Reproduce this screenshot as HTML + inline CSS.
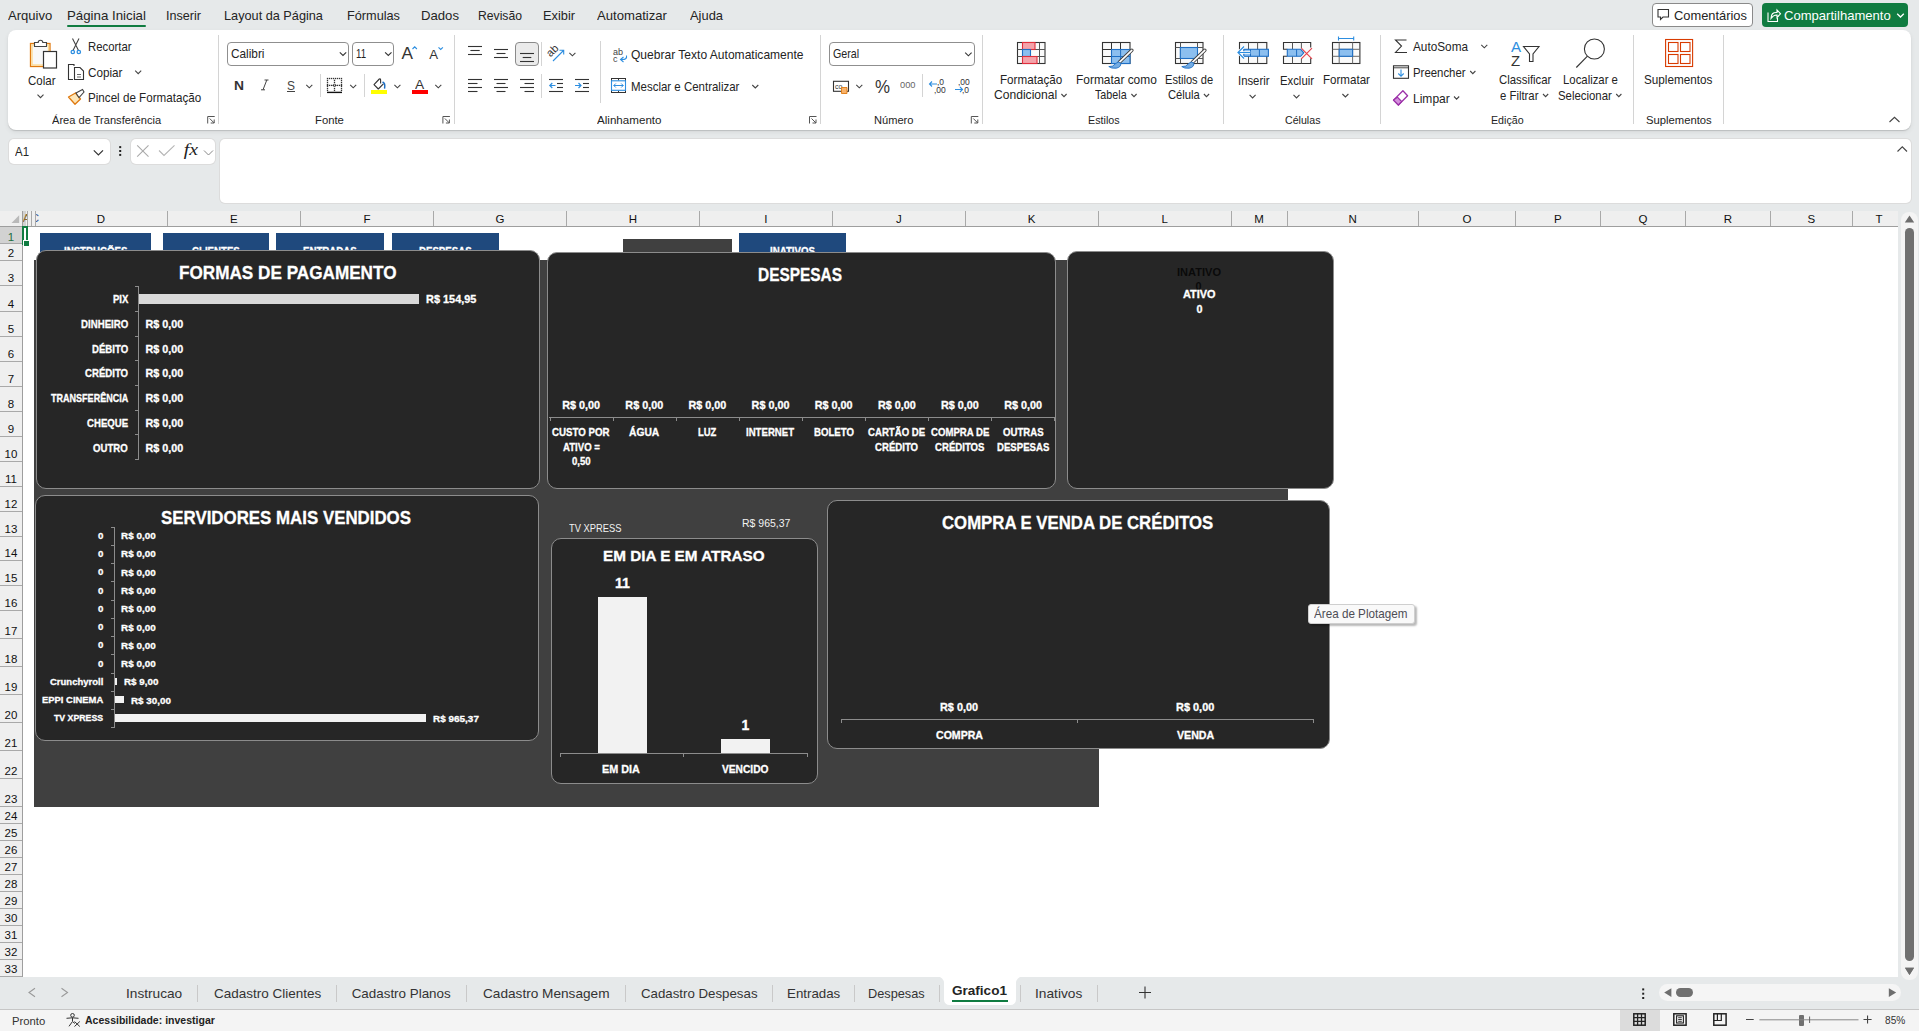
<!DOCTYPE html><html><head><meta charset="utf-8"><style>
html,body{margin:0;padding:0;}
body{width:1919px;height:1031px;position:relative;overflow:hidden;background:#e6e9ea;font-family:"Liberation Sans",sans-serif;}
.t{position:absolute;white-space:pre;line-height:1;transform-origin:0 0;}
svg{overflow:visible}
</style></head><body>
<div class="t" style="left:8.00px;top:9.05px;font-size:13.4px;color:#242424;transform:scaleX(0.9750);">Arquivo</div>
<div class="t" style="left:67.00px;top:9.05px;font-size:13.4px;color:#242424;transform:scaleX(0.9911);">Página Inicial</div>
<div class="t" style="left:166.00px;top:9.05px;font-size:13.4px;color:#242424;transform:scaleX(0.9401);">Inserir</div>
<div class="t" style="left:224.00px;top:9.05px;font-size:13.4px;color:#242424;transform:scaleX(0.9491);">Layout da Página</div>
<div class="t" style="left:347.00px;top:9.05px;font-size:13.4px;color:#242424;transform:scaleX(0.9490);">Fórmulas</div>
<div class="t" style="left:421.00px;top:9.05px;font-size:13.4px;color:#242424;transform:scaleX(0.9810);">Dados</div>
<div class="t" style="left:478.00px;top:9.05px;font-size:13.4px;color:#242424;transform:scaleX(0.9089);">Revisão</div>
<div class="t" style="left:543.00px;top:9.05px;font-size:13.4px;color:#242424;transform:scaleX(0.9550);">Exibir</div>
<div class="t" style="left:597.00px;top:9.05px;font-size:13.4px;color:#242424;transform:scaleX(0.9791);">Automatizar</div>
<div class="t" style="left:690.00px;top:9.05px;font-size:13.4px;color:#242424;transform:scaleX(0.9628);">Ajuda</div>
<div style="position:absolute;left:67px;top:25px;width:79px;height:2.2px;background:#107c41;border-radius:1px"></div>
<div style="position:absolute;left:1652.4px;top:3.2px;width:101px;height:23.4px;background:#fff;border:1px solid #8a8a8a;border-radius:4px;box-sizing:border-box"></div>
<div class="t" style="left:1673.70px;top:8.65px;font-size:13.4px;color:#242424;transform:scaleX(0.9596);">Comentários</div>
<div style="position:absolute;left:1762px;top:3.2px;width:145.8px;height:23.6px;background:#107c41;border-radius:4px"></div>
<div class="t" style="left:1783.60px;top:8.65px;font-size:13.4px;color:#fff;transform:scaleX(0.9755);">Compartilhamento</div>
<div style="position:absolute;left:8px;top:30px;width:1903px;height:100px;background:#fff;border-radius:8px;box-shadow:0 1px 1px rgba(0,0,0,0.14),0 2px 5px rgba(0,0,0,0.07)"></div>
<div style="position:absolute;left:218.0px;top:35px;width:1px;height:89px;background:#d4d4d4"></div>
<div style="position:absolute;left:454.0px;top:35px;width:1px;height:89px;background:#d4d4d4"></div>
<div style="position:absolute;left:820.0px;top:35px;width:1px;height:89px;background:#d4d4d4"></div>
<div style="position:absolute;left:982.0px;top:35px;width:1px;height:89px;background:#d4d4d4"></div>
<div style="position:absolute;left:1223.0px;top:35px;width:1px;height:89px;background:#d4d4d4"></div>
<div style="position:absolute;left:1380.0px;top:35px;width:1px;height:89px;background:#d4d4d4"></div>
<div style="position:absolute;left:1633.0px;top:35px;width:1px;height:89px;background:#d4d4d4"></div>
<div style="position:absolute;left:1723.0px;top:35px;width:1px;height:89px;background:#d4d4d4"></div>
<div class="t" style="left:52.30px;top:114.52px;font-size:11.2px;color:#242424;transform:scaleX(0.9909);">Área de Transferência</div>
<div class="t" style="left:314.50px;top:114.52px;font-size:11.2px;color:#242424;transform:scaleX(1.0091);">Fonte</div>
<div class="t" style="left:597.40px;top:114.52px;font-size:11.2px;color:#242424;transform:scaleX(1.0375);">Alinhamento</div>
<div class="t" style="left:873.80px;top:114.52px;font-size:11.2px;color:#242424;transform:scaleX(0.9916);">Número</div>
<div class="t" style="left:1087.60px;top:114.52px;font-size:11.2px;color:#242424;transform:scaleX(0.9594);">Estilos</div>
<div class="t" style="left:1284.90px;top:114.52px;font-size:11.2px;color:#242424;transform:scaleX(0.9504);">Células</div>
<div class="t" style="left:1490.80px;top:114.52px;font-size:11.2px;color:#242424;transform:scaleX(0.9519);">Edição</div>
<div class="t" style="left:1645.50px;top:114.52px;font-size:11.2px;color:#242424;transform:scaleX(1.0065);">Suplementos</div>
<div class="t" style="left:27.50px;top:75.27px;font-size:12.2px;color:#242424;transform:scaleX(0.9432);">Colar</div>
<div class="t" style="left:88.40px;top:40.87px;font-size:12.2px;color:#242424;transform:scaleX(0.9298);">Recortar</div>
<div class="t" style="left:88.40px;top:66.57px;font-size:12.2px;color:#242424;transform:scaleX(0.9599);">Copiar</div>
<div class="t" style="left:88.40px;top:92.27px;font-size:12.2px;color:#242424;transform:scaleX(0.9547);">Pincel de Formatação</div>
<div style="position:absolute;left:227.4px;top:42.25px;width:122px;height:23.4px;border:1px solid #8f8f8f;border-radius:4px;box-sizing:border-box"></div>
<div class="t" style="left:230.50px;top:47.57px;font-size:12.2px;color:#242424;transform:scaleX(0.9689);">Calibri</div>
<div style="position:absolute;left:352px;top:42.25px;width:42.3px;height:23.4px;border:1px solid #8f8f8f;border-radius:4px;box-sizing:border-box"></div>
<div class="t" style="left:355.50px;top:47.57px;font-size:12.2px;color:#242424;transform:scaleX(0.7896);">11</div>
<div class="t" style="left:401.50px;top:44.59px;font-size:17.2px;color:#333;">A</div>
<div class="t" style="left:429.20px;top:47.97px;font-size:13.2px;color:#333;">A</div>
<div class="t" style="left:233.60px;top:78.80px;font-size:13.4px;color:#333;font-weight:bold;transform:scaleX(1.0333);">N</div>
<div class="t" style="left:287.00px;top:78.82px;font-size:13.2px;color:#444;transform:scaleX(0.9086);">S</div>
<div style="position:absolute;left:287px;top:91.2px;width:8px;height:1px;background:#444"></div>
<div style="position:absolute;left:320px;top:74.4px;width:1px;height:23px;background:#d4d4d4"></div>
<div style="position:absolute;left:364px;top:74.4px;width:1px;height:23px;background:#d4d4d4"></div>
<div style="position:absolute;left:370.75px;top:90px;width:16.25px;height:3.75px;background:#ffff00"></div>
<div class="t" style="left:415.30px;top:78.12px;font-size:13.2px;color:#333;transform:scaleX(1.0449);">A</div>
<div style="position:absolute;left:411.75px;top:90px;width:16px;height:3.75px;background:#ff0000"></div>
<div style="position:absolute;left:515.3px;top:42.3px;width:23.5px;height:23.3px;background:#ebebeb;border:1px solid #8a8a8a;border-radius:4px;box-sizing:border-box"></div>
<div style="position:absolute;left:541px;top:42px;width:1px;height:23.6px;background:#d4d4d4"></div>
<div style="position:absolute;left:541px;top:74.3px;width:1px;height:23.5px;background:#d4d4d4"></div>
<div style="position:absolute;left:600.1px;top:41px;width:1px;height:62px;background:#d4d4d4"></div>
<div class="t" style="left:631.25px;top:49.07px;font-size:12.2px;color:#242424;transform:scaleX(0.9886);">Quebrar Texto Automaticamente</div>
<div class="t" style="left:631.25px;top:81.07px;font-size:12.2px;color:#242424;transform:scaleX(0.9413);">Mesclar e Centralizar</div>
<div style="position:absolute;left:829.2px;top:42.1px;width:145.5px;height:23.6px;border:1px solid #8f8f8f;border-radius:4px;box-sizing:border-box"></div>
<div class="t" style="left:832.60px;top:47.97px;font-size:12.2px;color:#242424;transform:scaleX(0.8782);">Geral</div>
<div class="t" style="left:874.50px;top:78.58px;font-size:17.5px;color:#333;transform:scaleX(0.9640);">%</div>
<div class="t" style="left:900.00px;top:81.48px;font-size:9px;color:#666;transform:scaleX(1.0322);">000</div>
<div style="position:absolute;left:922px;top:74.1px;width:1px;height:23.3px;background:#d4d4d4"></div>
<div class="t" style="left:999.50px;top:73.82px;font-size:12.2px;color:#242424;transform:scaleX(0.9563);">Formatação</div>
<div class="t" style="left:993.50px;top:89.47px;font-size:12.2px;color:#242424;transform:scaleX(0.9921);">Condicional</div>
<div class="t" style="left:1075.50px;top:73.82px;font-size:12.2px;color:#242424;transform:scaleX(0.9781);">Formatar como</div>
<div class="t" style="left:1095.10px;top:89.47px;font-size:12.2px;color:#242424;transform:scaleX(0.8803);">Tabela</div>
<div class="t" style="left:1164.50px;top:73.82px;font-size:12.2px;color:#242424;transform:scaleX(0.9094);">Estilos de</div>
<div class="t" style="left:1167.60px;top:89.47px;font-size:12.2px;color:#242424;transform:scaleX(0.9223);">Célula</div>
<div class="t" style="left:1237.50px;top:74.87px;font-size:12.2px;color:#242424;transform:scaleX(0.9293);">Inserir</div>
<div class="t" style="left:1279.70px;top:74.87px;font-size:12.2px;color:#242424;transform:scaleX(0.9288);">Excluir</div>
<div class="t" style="left:1322.90px;top:73.57px;font-size:12.2px;color:#242424;transform:scaleX(0.9497);">Formatar</div>
<div class="t" style="left:1413.20px;top:40.67px;font-size:12.2px;color:#242424;transform:scaleX(0.9672);">AutoSoma</div>
<div class="t" style="left:1413.20px;top:66.77px;font-size:12.2px;color:#242424;transform:scaleX(0.9344);">Preencher</div>
<div class="t" style="left:1413.20px;top:92.97px;font-size:12.2px;color:#242424;transform:scaleX(0.9868);">Limpar</div>
<div class="t" style="left:1510.80px;top:38.68px;font-size:15.5px;color:#2d8ee0;transform:scaleX(0.9769);">A</div>
<div class="t" style="left:1510.80px;top:52.78px;font-size:15.5px;color:#333;transform:scaleX(0.9611);">Z</div>
<div class="t" style="left:1498.60px;top:73.97px;font-size:12.2px;color:#242424;transform:scaleX(0.9313);">Classificar</div>
<div class="t" style="left:1500.30px;top:89.87px;font-size:12.2px;color:#242424;transform:scaleX(0.9311);">e Filtrar</div>
<div class="t" style="left:1563.20px;top:73.97px;font-size:12.2px;color:#242424;transform:scaleX(0.9322);">Localizar e</div>
<div class="t" style="left:1558.20px;top:89.87px;font-size:12.2px;color:#242424;transform:scaleX(0.9332);">Selecionar</div>
<div class="t" style="left:1644.30px;top:73.57px;font-size:12.2px;color:#242424;transform:scaleX(0.9619);">Suplementos</div>
<svg style="position:absolute;left:0;top:0" width="1919" height="1031"><path d="M207.7 123.5V116.5H214.7M209.7 118.5L214.2 123M214.2 119.5V123H210.7" fill="none" stroke="#555" stroke-width="1"/><path d="M442.9 123.5V116.5H449.9M444.9 118.5L449.4 123M449.4 119.5V123H445.9" fill="none" stroke="#555" stroke-width="1"/><path d="M809.5 123.5V116.5H816.5M811.5 118.5L816 123M816 119.5V123H812.5" fill="none" stroke="#555" stroke-width="1"/><path d="M971.3 123.5V116.5H978.3M973.3 118.5L977.8 123M977.8 119.5V123H974.3" fill="none" stroke="#555" stroke-width="1"/><rect x="30.5" y="43.5" width="19.5" height="23" fill="#f8f8f8" stroke="#e07a10" stroke-width="1.3"/><rect x="32" y="45" width="16.5" height="20" fill="none" stroke="#fcd98f" stroke-width="1.3"/><path d="M34.5 46.5V42.5H38.2A2.3 2.3 0 0 1 42.8 42.5H46.5V46.5Z" fill="#fff" stroke="#444" stroke-width="1.1"/><rect x="43.5" y="51.5" width="13" height="16.5" fill="#fff" stroke="#333" stroke-width="1.2"/><path d="M37.50 94.70L40.50 97.70L43.50 94.70" fill="none" stroke="#444" stroke-width="1.1"/><path d="M72.5 38.5L78.5 50.5M79 38.5L73 50.5" stroke="#444" stroke-width="1.1" fill="none"/><circle cx="72.8" cy="52" r="1.7" fill="none" stroke="#2d8ee0" stroke-width="1.3"/><circle cx="78.8" cy="52" r="1.7" fill="none" stroke="#2d8ee0" stroke-width="1.3"/><path d="M74 66V64.5H68.5V79.5H73" fill="none" stroke="#333" stroke-width="1.1"/><path d="M74.5 67.5H80L83.5 71V79.5H74.5Z" fill="#fff" stroke="#333" stroke-width="1.1"/><path d="M77 74.5H81M77 77H81" stroke="#555" stroke-width="0.9"/><path d="M135.20 70.60L138.20 73.60L141.20 70.60" fill="none" stroke="#444" stroke-width="1.1"/><path d="M68.5 97L75.5 93L80.5 99L75 104.3Z" fill="#fde6b8" stroke="#e07a10" stroke-width="1.3" stroke-linejoin="round"/><path d="M76 93L82.5 89.5L84 92L79 97.5Z" fill="#fff" stroke="#444" stroke-width="1.1"/><path d="M339.80 52.30L343.00 55.50L346.20 52.30" fill="none" stroke="#333" stroke-width="1.1"/><path d="M385.10 52.30L388.30 55.50L391.50 52.30" fill="none" stroke="#333" stroke-width="1.1"/><path d="M412.5 49L414.7 46.8L416.9 49" fill="none" stroke="#2d8ee0" stroke-width="1.1"/><path d="M438.5 47.3L440.7 49.5L442.9 47.3" fill="none" stroke="#2d8ee0" stroke-width="1.1"/><path d="M264.5 80H268.5M261 89.8H265M266.8 80L263 89.8" fill="none" stroke="#444" stroke-width="1"/><path d="M306.30 84.80L309.30 87.80L312.30 84.80" fill="none" stroke="#444" stroke-width="1.1"/><rect x="326.85" y="77.85" width="1.3" height="1.3" fill="#333"/><rect x="326.85" y="79.75" width="1.3" height="1.3" fill="#333"/><rect x="326.85" y="81.75" width="1.3" height="1.3" fill="#333"/><rect x="326.85" y="83.75" width="1.3" height="1.3" fill="#333"/><rect x="326.85" y="84.75" width="1.3" height="1.3" fill="#333"/><rect x="326.85" y="85.75" width="1.3" height="1.3" fill="#333"/><rect x="326.85" y="87.85" width="1.3" height="1.3" fill="#333"/><rect x="326.85" y="89.75" width="1.3" height="1.3" fill="#333"/><rect x="328.85" y="77.85" width="1.3" height="1.3" fill="#333"/><rect x="328.85" y="84.75" width="1.3" height="1.3" fill="#333"/><rect x="330.85" y="77.85" width="1.3" height="1.3" fill="#333"/><rect x="330.85" y="84.75" width="1.3" height="1.3" fill="#333"/><rect x="332.85" y="77.85" width="1.3" height="1.3" fill="#333"/><rect x="332.85" y="84.75" width="1.3" height="1.3" fill="#333"/><rect x="333.85" y="79.75" width="1.3" height="1.3" fill="#333"/><rect x="333.85" y="81.75" width="1.3" height="1.3" fill="#333"/><rect x="333.85" y="87.85" width="1.3" height="1.3" fill="#333"/><rect x="333.85" y="89.75" width="1.3" height="1.3" fill="#333"/><rect x="334.85" y="77.85" width="1.3" height="1.3" fill="#333"/><rect x="334.85" y="84.75" width="1.3" height="1.3" fill="#333"/><rect x="336.85" y="77.85" width="1.3" height="1.3" fill="#333"/><rect x="336.85" y="84.75" width="1.3" height="1.3" fill="#333"/><rect x="338.85" y="77.85" width="1.3" height="1.3" fill="#333"/><rect x="338.85" y="84.75" width="1.3" height="1.3" fill="#333"/><rect x="340.85" y="77.85" width="1.3" height="1.3" fill="#333"/><rect x="340.85" y="79.75" width="1.3" height="1.3" fill="#333"/><rect x="340.85" y="81.75" width="1.3" height="1.3" fill="#333"/><rect x="340.85" y="83.75" width="1.3" height="1.3" fill="#333"/><rect x="340.85" y="84.75" width="1.3" height="1.3" fill="#333"/><rect x="340.85" y="85.75" width="1.3" height="1.3" fill="#333"/><rect x="340.85" y="87.85" width="1.3" height="1.3" fill="#333"/><rect x="340.85" y="89.75" width="1.3" height="1.3" fill="#333"/><path d="M334.5 83.8L336 85.4L334.5 87L333 85.4Z" fill="none" stroke="#333" stroke-width="0.9"/><path d="M327 92.4H342" stroke="#111" stroke-width="1.4"/><path d="M350.20 84.80L353.20 87.80L356.20 84.80" fill="none" stroke="#444" stroke-width="1.1"/><path d="M380.6 83.6V80Q380.6 78.4 379.3 79L374 84.6L378.3 89L383.4 83.8" fill="none" stroke="#333" stroke-width="1.1" stroke-linejoin="round"/><path d="M383 82.2Q385.4 83.3 384.6 88" fill="none" stroke="#1f6fc4" stroke-width="1.5" stroke-linecap="round"/><path d="M394.40 84.80L397.40 87.80L400.40 84.80" fill="none" stroke="#444" stroke-width="1.1"/><path d="M435.30 84.80L438.30 87.80L441.30 84.80" fill="none" stroke="#444" stroke-width="1.1"/><path d="M468 46.5H482" stroke="#333" stroke-width="1.1"/><path d="M470.4 50.5H479.7" stroke="#333" stroke-width="1.1"/><path d="M468 54.5H482" stroke="#333" stroke-width="1.1"/><path d="M494 49.5H508" stroke="#333" stroke-width="1.1"/><path d="M496.5 53.5H505.5" stroke="#333" stroke-width="1.1"/><path d="M494 57.5H508" stroke="#333" stroke-width="1.1"/><path d="M520 53.5H534" stroke="#333" stroke-width="1.1"/><path d="M522.7 57.5H531.3" stroke="#333" stroke-width="1.1"/><path d="M520 61.5H534" stroke="#333" stroke-width="1.1"/><text x="0" y="0" font-size="11" fill="#333" font-family="Liberation Sans" transform="translate(550.6 57.6) rotate(-45)">ab</text><path d="M553 61L563.5 50.5M559.5 50.3H563.7V54.5" fill="none" stroke="#2d8ee0" stroke-width="1.1"/><path d="M569.40 52.80L572.40 55.80L575.40 52.80" fill="none" stroke="#444" stroke-width="1.1"/><path d="M468 79.5H482" stroke="#333" stroke-width="1.1"/><path d="M468 83.5H477.5" stroke="#333" stroke-width="1.1"/><path d="M468 87.5H482" stroke="#333" stroke-width="1.1"/><path d="M468 91.5H477.5" stroke="#333" stroke-width="1.1"/><path d="M494 79.5H508" stroke="#333" stroke-width="1.1"/><path d="M496.5 83.5H505.5" stroke="#333" stroke-width="1.1"/><path d="M494 87.5H508" stroke="#333" stroke-width="1.1"/><path d="M496.5 91.5H505.5" stroke="#333" stroke-width="1.1"/><path d="M520 79.5H534" stroke="#333" stroke-width="1.1"/><path d="M524.5 83.5H534" stroke="#333" stroke-width="1.1"/><path d="M520 87.5H534" stroke="#333" stroke-width="1.1"/><path d="M524.5 91.5H534" stroke="#333" stroke-width="1.1"/><path d="M549 79.5H563" stroke="#333" stroke-width="1.1"/><path d="M557 83.5H563" stroke="#333" stroke-width="1.1"/><path d="M557 87.5H563" stroke="#333" stroke-width="1.1"/><path d="M549 91.5H563" stroke="#333" stroke-width="1.1"/><path d="M555.5 85.5H549.8M552.3 83L549.8 85.5L552.3 88" fill="none" stroke="#2d8ee0" stroke-width="1.2"/><path d="M575 79.5H589" stroke="#333" stroke-width="1.1"/><path d="M583 83.5H589" stroke="#333" stroke-width="1.1"/><path d="M583 87.5H589" stroke="#333" stroke-width="1.1"/><path d="M575 91.5H589" stroke="#333" stroke-width="1.1"/><path d="M575 85.5H581M578.5 83L581 85.5L578.5 88" fill="none" stroke="#2d8ee0" stroke-width="1.2"/><text x="613" y="54.5" font-size="9" fill="#444" font-family="Liberation Sans">ab</text><text x="613" y="62" font-size="9" fill="#444" font-family="Liberation Sans">c</text><path d="M626.5 55.5Q627.5 60 621 59.5M623.5 57L620.5 59.5L623.5 62" fill="none" stroke="#2d8ee0" stroke-width="1.1"/><rect x="611.5" y="78.5" width="14" height="14" fill="none" stroke="#333" stroke-width="1"/><path d="M618.5 78.5V80.5M618.5 90.5V92.5" stroke="#333"/><rect x="611.5" y="80.8" width="14" height="9.5" fill="#fff" stroke="#2d8ee0" stroke-width="1.1"/><path d="M613.8 85.5H623.2M615.8 83.5L613.8 85.5L615.8 87.5M621.2 83.5L623.2 85.5L621.2 87.5" fill="none" stroke="#2d8ee0" stroke-width="1"/><path d="M752.30 85.00L755.30 88.00L758.30 85.00" fill="none" stroke="#444" stroke-width="1.1"/><path d="M965.20 52.60L968.40 55.80L971.60 52.60" fill="none" stroke="#333" stroke-width="1.1"/><rect x="833.5" y="81.3" width="15" height="10" fill="none" stroke="#333" stroke-width="1.1"/><text x="835" y="89" font-size="7" fill="#333" font-family="Liberation Sans">co</text><path d="M841.5 87.5h5.5v6h-5.5z" fill="#f7b26b" stroke="#e07a10" stroke-width="0.9"/><path d="M856.30 84.80L859.30 87.80L862.30 84.80" fill="none" stroke="#444" stroke-width="1.1"/><text x="937" y="85" font-size="8.5" fill="#333" font-family="Liberation Sans">,0</text><text x="934" y="93" font-size="8.5" fill="#333" font-family="Liberation Sans">,00</text><path d="M937 84H929.5M932 81.5L929.5 84L932 86.5" fill="none" stroke="#2d8ee0" stroke-width="1.1"/><text x="958" y="85" font-size="8.5" fill="#333" font-family="Liberation Sans">,00</text><text x="962" y="93" font-size="8.5" fill="#333" font-family="Liberation Sans">,0</text><path d="M955 89.5H962.5M960 87L962.5 89.5L960 92" fill="none" stroke="#2d8ee0" stroke-width="1.1"/><rect x="1017.5" y="42.5" width="27.5" height="21.0" fill="#fafafa" stroke="#333" stroke-width="1.1"/><path d="M1022.5 42.5V63.5" stroke="#555" stroke-width="1"/><path d="M1039.5 42.5V63.5" stroke="#555" stroke-width="1"/><path d="M1017.5 49.5H1045" stroke="#555" stroke-width="1"/><path d="M1017.5 56.5H1045" stroke="#555" stroke-width="1"/><rect x="1022.5" y="42.5" width="12.5" height="7" fill="#f4a3aa" stroke="#e02f3c" stroke-width="1.1"/><rect x="1022.5" y="49.5" width="8" height="7" fill="#8cbfef" stroke="#1f6fc4" stroke-width="1.1"/><rect x="1022.5" y="56.5" width="14.5" height="7" fill="#f4a3aa" stroke="#e02f3c" stroke-width="1.1"/><path d="M1061.40 94.00L1064.00 96.60L1066.60 94.00" fill="none" stroke="#444" stroke-width="1.1"/><rect x="1102.5" y="42.5" width="27.5" height="21.0" fill="#fafafa" stroke="#333" stroke-width="1.1"/><path d="M1111.5 42.5V63.5" stroke="#333" stroke-width="1"/><path d="M1120.5 42.5V63.5" stroke="#333" stroke-width="1"/><path d="M1102.5 49.5H1130" stroke="#333" stroke-width="1"/><path d="M1102.5 56.5H1130" stroke="#333" stroke-width="1"/><rect x="1111.5" y="49.5" width="18.5" height="14" fill="#8cbfef" stroke="#1f6fc4" stroke-width="1.1"/><path d="M1120.6 49.5V63.5M1111.5 56.5H1130" stroke="#1f6fc4" stroke-width="1"/><path d="M1131.8 50.3L1119.3 62.3" stroke="#444" stroke-width="3.6" stroke-linecap="round"/><path d="M1131.8 50.3L1119.3 62.3" stroke="#fff" stroke-width="1.6" stroke-linecap="round"/><path d="M1108.8 66.6Q1113.3 67 1115.6 63.6Q1118.3 60.6 1120.8 63.2Q1121.2 67.2 1116.2 68.2Q1111.3 68.7 1108.8 66.6Z" fill="#74ace3" stroke="#1f6fc4" stroke-width="0.9"/><path d="M1131.40 94.00L1134.00 96.60L1136.60 94.00" fill="none" stroke="#444" stroke-width="1.1"/><rect x="1175.5" y="42.5" width="27.5" height="21.0" fill="#fafafa" stroke="#333" stroke-width="1.1"/><path d="M1180.5 42.5V63.5" stroke="#555" stroke-width="1"/><path d="M1197.5 42.5V63.5" stroke="#555" stroke-width="1"/><path d="M1175.5 47.5H1203" stroke="#555" stroke-width="1"/><path d="M1175.5 58.5H1203" stroke="#555" stroke-width="1"/><rect x="1180.3" y="47.5" width="17.2" height="11" fill="#8cbfef" stroke="#1f6fc4" stroke-width="1.1"/><path d="M1204.8 50.3L1192.3 62.3" stroke="#444" stroke-width="3.6" stroke-linecap="round"/><path d="M1204.8 50.3L1192.3 62.3" stroke="#fff" stroke-width="1.6" stroke-linecap="round"/><path d="M1181.8 66.6Q1186.3 67 1188.6 63.6Q1191.3 60.6 1193.8 63.2Q1194.2 67.2 1189.2 68.2Q1184.3 68.7 1181.8 66.6Z" fill="#74ace3" stroke="#1f6fc4" stroke-width="0.9"/><path d="M1203.90 94.00L1206.50 96.60L1209.10 94.00" fill="none" stroke="#444" stroke-width="1.1"/><rect x="1239.5" y="42.5" width="27.3" height="21" fill="#fafafa" stroke="#333" stroke-width="1.1"/><path d="M1248.5 42.5V63.5M1257.6 42.5V63.5" stroke="#555" stroke-width="1"/><rect x="1243.8" y="49.3" width="24.6" height="7" fill="#8cbfef" stroke="#1f6fc4" stroke-width="1.1"/><path d="M1250.5 49.3V56.3M1259.4 49.3V56.3" stroke="#1f6fc4" stroke-width="1"/><path d="M1250.3 52.5H1238M1244 46.5L1238 52.5L1244 58.5" fill="none" stroke="#fff" stroke-width="2.6"/><path d="M1250.3 52.5H1238M1244 46.5L1238 52.5L1244 58.5" fill="none" stroke="#2d8ee0" stroke-width="1.2"/><path d="M1249.60 94.90L1252.60 97.90L1255.60 94.90" fill="none" stroke="#444" stroke-width="1.1"/><rect x="1283.5" y="42.5" width="27.2" height="21" fill="#fafafa"/><path d="M1287.3 49.3H1283.5V42.5H1310.7V47.5M1310.7 58.3V63.5H1283.5V56.3H1287.3" fill="none" stroke="#333" stroke-width="1.1"/><path d="M1292.5 42.5V49.3M1301.4 42.5V48M1292.5 56.3V63.5M1301.4 58.5V63.5" stroke="#555" stroke-width="1"/><path d="M1287.3 49.3H1300.7L1303.8 52.8L1300.7 56.3H1287.3Z" fill="#8cbfef" stroke="#1f6fc4" stroke-width="1.1"/><path d="M1296.6 49.3V56.3" stroke="#1f6fc4" stroke-width="1"/><path d="M1301.3 48.2L1312 58.8M1312 48.2L1301.3 58.8" stroke="#e8404a" stroke-width="1.1"/><path d="M1293.50 94.90L1296.50 97.90L1299.50 94.90" fill="none" stroke="#444" stroke-width="1.1"/><rect x="1332.5" y="42.5" width="27.4" height="21" fill="#fafafa" stroke="#333" stroke-width="1.1"/><path d="M1339.2 42.5V63.5M1352.6 42.5V63.5M1332.5 49.3H1359.9M1332.5 56.3H1359.9" stroke="#6b6b6b" stroke-width="1"/><rect x="1339.2" y="49.3" width="13.4" height="7" fill="#8cbfef" stroke="#1f6fc4" stroke-width="1.1"/><path d="M1338.5 38.5H1353.7M1338.5 36.5V40.5M1353.7 36.5V40.5" stroke="#2d8ee0" stroke-width="1.1"/><path d="M1342.40 94.00L1345.40 97.00L1348.40 94.00" fill="none" stroke="#444" stroke-width="1.1"/><path d="M1406.5 40H1395.5L1401.5 46L1395.5 52.5H1407" fill="none" stroke="#333" stroke-width="1.1"/><path d="M1481.30 44.80L1484.30 47.80L1487.30 44.80" fill="none" stroke="#444" stroke-width="1.1"/><rect x="1393.5" y="65.8" width="15" height="12.5" fill="none" stroke="#333" stroke-width="1.1"/><path d="M1393.5 67.8H1408.5" stroke="#333" stroke-width="0.9"/><path d="M1401 69.5V76M1398.3 73.5L1401 76.3L1403.7 73.5" fill="none" stroke="#2d8ee0" stroke-width="1.1"/><path d="M1470.20 71.00L1472.80 73.60L1475.40 71.00" fill="none" stroke="#444" stroke-width="1.1"/><path d="M1402.9 90.8L1407.6 95.8L1398.4 105L1393.5 100.1Z" fill="#fff" stroke="#9b30a8" stroke-width="1.3" stroke-linejoin="round"/><path d="M1397.4 97.2L1401.6 101.5L1398.4 105L1393.5 100.1Z" fill="#d48fdc" stroke="#9b30a8" stroke-width="1.2" stroke-linejoin="round"/><path d="M1454.00 96.50L1456.60 99.10L1459.20 96.50" fill="none" stroke="#444" stroke-width="1.1"/><path d="M1523.5 46.5H1539L1533 54V61.5H1529.5V54Z" fill="none" stroke="#333" stroke-width="1.1"/><path d="M1543.00 94.00L1545.60 96.60L1548.20 94.00" fill="none" stroke="#444" stroke-width="1.1"/><circle cx="1594.4" cy="49" r="10" fill="none" stroke="#333" stroke-width="1.1"/><path d="M1587.2 56.3L1576.3 67.5" stroke="#333" stroke-width="1.1"/><path d="M1616.20 94.00L1618.80 96.60L1621.40 94.00" fill="none" stroke="#444" stroke-width="1.1"/><rect x="1665.6" y="39.5" width="27" height="27" fill="none" stroke="#d83b01" stroke-width="1.1"/><rect x="1668.5" y="42.5" width="9.5" height="9" fill="none" stroke="#d83b01" stroke-width="1.1"/><rect x="1680.5" y="42.5" width="9.5" height="9" fill="none" stroke="#d83b01" stroke-width="1.1"/><rect x="1668.5" y="54.5" width="9.5" height="9" fill="none" stroke="#d83b01" stroke-width="1.1"/><rect x="1680.5" y="54.5" width="9.5" height="9" fill="none" stroke="#d83b01" stroke-width="1.1"/><path d="M1889.5 122L1894.5 117.3L1899.5 122" fill="none" stroke="#444" stroke-width="1.1"/></svg>
<div style="position:absolute;left:8.5px;top:138.5px;width:101px;height:25px;background:#fff;border-radius:5px;box-shadow:0 0 0 1px #dcdcdc"></div>
<div class="t" style="left:15.00px;top:144.80px;font-size:13.4px;color:#242424;transform:scaleX(0.8541);">A1</div>
<div style="position:absolute;left:130.6px;top:138.5px;width:84.4px;height:25px;background:#fff;border-radius:5px;box-shadow:0 0 0 1px #dcdcdc"></div>
<div style="position:absolute;left:220.3px;top:138.5px;width:1691px;height:64.8px;background:#fff;border-radius:5px;box-shadow:0 0 0 1px #dcdcdc"></div>
<div style="position:absolute;left:0px;top:211px;width:1898px;height:15.7px;background:#efefef"></div>
<div style="position:absolute;left:0px;top:226px;width:1898px;height:1px;background:#9e9e9e"></div>
<div style="position:absolute;left:0px;top:227px;width:22px;height:750px;background:#efefef"></div>
<div style="position:absolute;left:22px;top:211px;width:1px;height:766px;background:#9e9e9e"></div>
<div style="position:absolute;left:23px;top:227px;width:1875.2px;height:750px;background:#fff"></div>
<div style="position:absolute;left:22.5px;top:211px;width:3.5px;height:15px;background:#d2d2d2"></div>
<div style="position:absolute;left:26.5px;top:211px;width:1px;height:15px;background:#a9a9a9"></div>
<div style="position:absolute;left:30.6px;top:211px;width:1px;height:15px;background:#a9a9a9"></div>
<div style="position:absolute;left:34.6px;top:211px;width:1px;height:15px;background:#a9a9a9"></div>
<div class="t" style="left:22.80px;top:212.96px;font-size:11.5px;color:#8a6a30;clip-path:inset(0 0 0 0);">A</div>
<div class="t" style="left:26.80px;top:212.96px;font-size:11.5px;color:#6a3a2a;">B</div>
<div class="t" style="left:30.80px;top:212.96px;font-size:11.5px;color:#3a5a9a;">C</div>
<div style="position:absolute;left:26.5px;top:211px;width:1px;height:15px;background:#a9a9a9"></div>
<div style="position:absolute;left:27.5px;top:211px;width:3px;height:15px;background:#efefef"></div>
<div style="position:absolute;left:31.6px;top:211px;width:3px;height:15px;background:#efefef"></div>
<div style="position:absolute;left:30.6px;top:211px;width:1px;height:15px;background:#a9a9a9"></div>
<div style="position:absolute;left:34.6px;top:211px;width:1px;height:15px;background:#a9a9a9"></div>
<div style="position:absolute;left:167px;top:211px;width:1px;height:15px;background:#a9a9a9"></div>
<div class="t" style="left:96.75px;top:213.96px;font-size:11.5px;color:#111;">D</div>
<div style="position:absolute;left:300px;top:211px;width:1px;height:15px;background:#a9a9a9"></div>
<div class="t" style="left:230.01px;top:213.96px;font-size:11.5px;color:#111;">E</div>
<div style="position:absolute;left:433px;top:211px;width:1px;height:15px;background:#a9a9a9"></div>
<div class="t" style="left:363.54px;top:213.96px;font-size:11.5px;color:#111;">F</div>
<div style="position:absolute;left:566px;top:211px;width:1px;height:15px;background:#a9a9a9"></div>
<div class="t" style="left:495.48px;top:213.96px;font-size:11.5px;color:#111;">G</div>
<div style="position:absolute;left:699px;top:211px;width:1px;height:15px;background:#a9a9a9"></div>
<div class="t" style="left:628.70px;top:213.96px;font-size:11.5px;color:#111;">H</div>
<div style="position:absolute;left:832px;top:211px;width:1px;height:15px;background:#a9a9a9"></div>
<div class="t" style="left:764.35px;top:213.96px;font-size:11.5px;color:#111;">I</div>
<div style="position:absolute;left:965px;top:211px;width:1px;height:15px;background:#a9a9a9"></div>
<div class="t" style="left:895.98px;top:213.96px;font-size:11.5px;color:#111;">J</div>
<div style="position:absolute;left:1098px;top:211px;width:1px;height:15px;background:#a9a9a9"></div>
<div class="t" style="left:1027.86px;top:213.96px;font-size:11.5px;color:#111;">K</div>
<div style="position:absolute;left:1231px;top:211px;width:1px;height:15px;background:#a9a9a9"></div>
<div class="t" style="left:1161.50px;top:213.96px;font-size:11.5px;color:#111;">L</div>
<div style="position:absolute;left:1287px;top:211px;width:1px;height:15px;background:#a9a9a9"></div>
<div class="t" style="left:1254.31px;top:213.96px;font-size:11.5px;color:#111;">M</div>
<div style="position:absolute;left:1418px;top:211px;width:1px;height:15px;background:#a9a9a9"></div>
<div class="t" style="left:1348.60px;top:213.96px;font-size:11.5px;color:#111;">N</div>
<div style="position:absolute;left:1515px;top:211px;width:1px;height:15px;background:#a9a9a9"></div>
<div class="t" style="left:1462.48px;top:213.96px;font-size:11.5px;color:#111;">O</div>
<div style="position:absolute;left:1600px;top:211px;width:1px;height:15px;background:#a9a9a9"></div>
<div class="t" style="left:1554.11px;top:213.96px;font-size:11.5px;color:#111;">P</div>
<div style="position:absolute;left:1685px;top:211px;width:1px;height:15px;background:#a9a9a9"></div>
<div class="t" style="left:1638.58px;top:213.96px;font-size:11.5px;color:#111;">Q</div>
<div style="position:absolute;left:1770px;top:211px;width:1px;height:15px;background:#a9a9a9"></div>
<div class="t" style="left:1723.85px;top:213.96px;font-size:11.5px;color:#111;">R</div>
<div style="position:absolute;left:1852px;top:211px;width:1px;height:15px;background:#a9a9a9"></div>
<div class="t" style="left:1807.61px;top:213.96px;font-size:11.5px;color:#111;">S</div>
<div class="t" style="left:1875.49px;top:213.96px;font-size:11.5px;color:#111;">T</div>
<div style="position:absolute;left:0px;top:227px;width:22px;height:16.8px;background:#d2d2d2"></div>
<div style="position:absolute;left:0px;top:243px;width:22px;height:1px;background:#a9a9a9"></div>
<div class="t" style="left:7.80px;top:231.56px;font-size:11.5px;color:#1e6e42;">1</div>
<div style="position:absolute;left:0px;top:260px;width:22px;height:1px;background:#a9a9a9"></div>
<div class="t" style="left:7.80px;top:248.06px;font-size:11.5px;color:#111;">2</div>
<div style="position:absolute;left:0px;top:285px;width:22px;height:1px;background:#a9a9a9"></div>
<div class="t" style="left:7.80px;top:273.26px;font-size:11.5px;color:#111;">3</div>
<div style="position:absolute;left:0px;top:311px;width:22px;height:1px;background:#a9a9a9"></div>
<div class="t" style="left:7.80px;top:298.76px;font-size:11.5px;color:#111;">4</div>
<div style="position:absolute;left:0px;top:336px;width:22px;height:1px;background:#a9a9a9"></div>
<div class="t" style="left:7.80px;top:324.16px;font-size:11.5px;color:#111;">5</div>
<div style="position:absolute;left:0px;top:361px;width:22px;height:1px;background:#a9a9a9"></div>
<div class="t" style="left:7.80px;top:349.16px;font-size:11.5px;color:#111;">6</div>
<div style="position:absolute;left:0px;top:386px;width:22px;height:1px;background:#a9a9a9"></div>
<div class="t" style="left:7.80px;top:373.76px;font-size:11.5px;color:#111;">7</div>
<div style="position:absolute;left:0px;top:411px;width:22px;height:1px;background:#a9a9a9"></div>
<div class="t" style="left:7.80px;top:398.76px;font-size:11.5px;color:#111;">8</div>
<div style="position:absolute;left:0px;top:436px;width:22px;height:1px;background:#a9a9a9"></div>
<div class="t" style="left:7.80px;top:423.76px;font-size:11.5px;color:#111;">9</div>
<div style="position:absolute;left:0px;top:461px;width:22px;height:1px;background:#a9a9a9"></div>
<div class="t" style="left:4.60px;top:448.76px;font-size:11.5px;color:#111;">10</div>
<div style="position:absolute;left:0px;top:486px;width:22px;height:1px;background:#a9a9a9"></div>
<div class="t" style="left:5.03px;top:473.76px;font-size:11.5px;color:#111;">11</div>
<div style="position:absolute;left:0px;top:511px;width:22px;height:1px;background:#a9a9a9"></div>
<div class="t" style="left:4.60px;top:498.76px;font-size:11.5px;color:#111;">12</div>
<div style="position:absolute;left:0px;top:536px;width:22px;height:1px;background:#a9a9a9"></div>
<div class="t" style="left:4.60px;top:523.76px;font-size:11.5px;color:#111;">13</div>
<div style="position:absolute;left:0px;top:560px;width:22px;height:1px;background:#a9a9a9"></div>
<div class="t" style="left:4.60px;top:548.26px;font-size:11.5px;color:#111;">14</div>
<div style="position:absolute;left:0px;top:585px;width:22px;height:1px;background:#a9a9a9"></div>
<div class="t" style="left:4.60px;top:573.26px;font-size:11.5px;color:#111;">15</div>
<div style="position:absolute;left:0px;top:610px;width:22px;height:1px;background:#a9a9a9"></div>
<div class="t" style="left:4.60px;top:598.36px;font-size:11.5px;color:#111;">16</div>
<div style="position:absolute;left:0px;top:638px;width:22px;height:1px;background:#a9a9a9"></div>
<div class="t" style="left:4.60px;top:626.26px;font-size:11.5px;color:#111;">17</div>
<div style="position:absolute;left:0px;top:666px;width:22px;height:1px;background:#a9a9a9"></div>
<div class="t" style="left:4.60px;top:654.16px;font-size:11.5px;color:#111;">18</div>
<div style="position:absolute;left:0px;top:694px;width:22px;height:1px;background:#a9a9a9"></div>
<div class="t" style="left:4.60px;top:682.16px;font-size:11.5px;color:#111;">19</div>
<div style="position:absolute;left:0px;top:722px;width:22px;height:1px;background:#a9a9a9"></div>
<div class="t" style="left:4.60px;top:710.36px;font-size:11.5px;color:#111;">20</div>
<div style="position:absolute;left:0px;top:750px;width:22px;height:1px;background:#a9a9a9"></div>
<div class="t" style="left:4.60px;top:738.26px;font-size:11.5px;color:#111;">21</div>
<div style="position:absolute;left:0px;top:778px;width:22px;height:1px;background:#a9a9a9"></div>
<div class="t" style="left:4.60px;top:766.36px;font-size:11.5px;color:#111;">22</div>
<div style="position:absolute;left:0px;top:806px;width:22px;height:1px;background:#a9a9a9"></div>
<div class="t" style="left:4.60px;top:794.46px;font-size:11.5px;color:#111;">23</div>
<div style="position:absolute;left:0px;top:823px;width:22px;height:1px;background:#a9a9a9"></div>
<div class="t" style="left:4.60px;top:811.46px;font-size:11.5px;color:#111;">24</div>
<div style="position:absolute;left:0px;top:840px;width:22px;height:1px;background:#a9a9a9"></div>
<div class="t" style="left:4.60px;top:828.16px;font-size:11.5px;color:#111;">25</div>
<div style="position:absolute;left:0px;top:857px;width:22px;height:1px;background:#a9a9a9"></div>
<div class="t" style="left:4.60px;top:845.06px;font-size:11.5px;color:#111;">26</div>
<div style="position:absolute;left:0px;top:874px;width:22px;height:1px;background:#a9a9a9"></div>
<div class="t" style="left:4.60px;top:862.06px;font-size:11.5px;color:#111;">27</div>
<div style="position:absolute;left:0px;top:891px;width:22px;height:1px;background:#a9a9a9"></div>
<div class="t" style="left:4.60px;top:879.06px;font-size:11.5px;color:#111;">28</div>
<div style="position:absolute;left:0px;top:908px;width:22px;height:1px;background:#a9a9a9"></div>
<div class="t" style="left:4.60px;top:895.96px;font-size:11.5px;color:#111;">29</div>
<div style="position:absolute;left:0px;top:925px;width:22px;height:1px;background:#a9a9a9"></div>
<div class="t" style="left:4.60px;top:912.96px;font-size:11.5px;color:#111;">30</div>
<div style="position:absolute;left:0px;top:942px;width:22px;height:1px;background:#a9a9a9"></div>
<div class="t" style="left:4.60px;top:929.96px;font-size:11.5px;color:#111;">31</div>
<div style="position:absolute;left:0px;top:959px;width:22px;height:1px;background:#a9a9a9"></div>
<div class="t" style="left:4.60px;top:946.86px;font-size:11.5px;color:#111;">32</div>
<div style="position:absolute;left:0px;top:976px;width:22px;height:1px;background:#a9a9a9"></div>
<div class="t" style="left:4.60px;top:964.26px;font-size:11.5px;color:#111;">33</div>
<div style="position:absolute;left:1898.2px;top:211px;width:20.8px;height:766px;background:#e6e9ea"></div>
<div style="position:absolute;left:1900.7px;top:211.5px;width:17px;height:768px;background:#f4f4f4;border-radius:8px"></div>
<div style="position:absolute;left:1905px;top:227.7px;width:9px;height:733px;background:#707070;border-radius:4.5px"></div>
<style>.w{-webkit-text-stroke:0.3px #fff}</style>
<div style="position:absolute;left:40px;top:233px;width:111px;height:30px;background:#1f497d"></div>
<div style="position:absolute;left:163px;top:233px;width:106px;height:30px;background:#1f497d"></div>
<div style="position:absolute;left:276px;top:233px;width:108px;height:30px;background:#1f497d"></div>
<div style="position:absolute;left:392px;top:233px;width:107px;height:30px;background:#1f497d"></div>
<div style="position:absolute;left:623px;top:239px;width:109px;height:30px;background:#404040"></div>
<div style="position:absolute;left:739px;top:233px;width:107px;height:30px;background:#1f497d"></div>
<div class="t w" style="left:63.83px;top:246.01px;font-size:10.5px;color:#ffffff;font-weight:bold;transform:scaleX(0.9200);">INSTRUÇÕES</div>
<div class="t w" style="left:192.12px;top:246.01px;font-size:10.5px;color:#ffffff;font-weight:bold;transform:scaleX(0.9200);">CLIENTES</div>
<div class="t w" style="left:303.17px;top:246.01px;font-size:10.5px;color:#ffffff;font-weight:bold;transform:scaleX(0.9200);">ENTRADAS</div>
<div class="t w" style="left:419.19px;top:246.01px;font-size:10.5px;color:#ffffff;font-weight:bold;transform:scaleX(0.9200);">DESPESAS</div>
<div class="t w" style="left:770.05px;top:246.01px;font-size:10.5px;color:#ffffff;font-weight:bold;transform:scaleX(0.9200);">INATIVOS</div>
<div style="position:absolute;left:34px;top:260px;width:1254px;height:240px;background:#404040"></div>
<div style="position:absolute;left:34px;top:500px;width:1065px;height:307px;background:#404040"></div>
<div style="position:absolute;left:36px;top:250px;width:504px;height:238.5px;background:#262626;border:1px solid #8c8c8c;border-radius:10px;box-sizing:border-box"></div>
<div class="t w" style="left:178.50px;top:263.91px;font-size:18px;color:#ffffff;font-weight:bold;transform:scaleX(0.9525);">FORMAS DE PAGAMENTO</div>
<div style="position:absolute;left:138px;top:286px;width:1px;height:174px;background:#8c8c8c"></div>
<div style="position:absolute;left:135px;top:286px;width:3px;height:1px;background:#8c8c8c"></div>
<div style="position:absolute;left:135px;top:311px;width:3px;height:1px;background:#8c8c8c"></div>
<div style="position:absolute;left:135px;top:336px;width:3px;height:1px;background:#8c8c8c"></div>
<div style="position:absolute;left:135px;top:360px;width:3px;height:1px;background:#8c8c8c"></div>
<div style="position:absolute;left:135px;top:385px;width:3px;height:1px;background:#8c8c8c"></div>
<div style="position:absolute;left:135px;top:410px;width:3px;height:1px;background:#8c8c8c"></div>
<div style="position:absolute;left:135px;top:434px;width:3px;height:1px;background:#8c8c8c"></div>
<div style="position:absolute;left:135px;top:459px;width:3px;height:1px;background:#8c8c8c"></div>
<div class="t w" style="left:112.50px;top:294.26px;font-size:10.8px;color:#ffffff;font-weight:bold;transform:scaleX(0.8846);">PIX</div>
<div class="t w" style="left:80.60px;top:319.26px;font-size:10.8px;color:#ffffff;font-weight:bold;transform:scaleX(0.8958);">DINHEIRO</div>
<div class="t w" style="left:145.40px;top:319.26px;font-size:10.8px;color:#ffffff;font-weight:bold;">R$ 0,00</div>
<div class="t w" style="left:91.76px;top:343.86px;font-size:10.8px;color:#ffffff;font-weight:bold;transform:scaleX(0.8900);">DÉBITO</div>
<div class="t w" style="left:145.40px;top:343.86px;font-size:10.8px;color:#ffffff;font-weight:bold;">R$ 0,00</div>
<div class="t w" style="left:84.82px;top:368.36px;font-size:10.8px;color:#ffffff;font-weight:bold;transform:scaleX(0.8900);">CRÉDITO</div>
<div class="t w" style="left:145.40px;top:368.36px;font-size:10.8px;color:#ffffff;font-weight:bold;">R$ 0,00</div>
<div class="t w" style="left:50.60px;top:393.26px;font-size:10.8px;color:#ffffff;font-weight:bold;transform:scaleX(0.8365);">TRANSFERÊNCIA</div>
<div class="t w" style="left:145.40px;top:393.26px;font-size:10.8px;color:#ffffff;font-weight:bold;">R$ 0,00</div>
<div class="t w" style="left:86.78px;top:418.16px;font-size:10.8px;color:#ffffff;font-weight:bold;transform:scaleX(0.8900);">CHEQUE</div>
<div class="t w" style="left:145.40px;top:418.16px;font-size:10.8px;color:#ffffff;font-weight:bold;">R$ 0,00</div>
<div class="t w" style="left:93.19px;top:442.96px;font-size:10.8px;color:#ffffff;font-weight:bold;transform:scaleX(0.8900);">OUTRO</div>
<div class="t w" style="left:145.40px;top:442.96px;font-size:10.8px;color:#ffffff;font-weight:bold;">R$ 0,00</div>
<div style="position:absolute;left:139px;top:294px;width:280px;height:10px;background:#d9d9d9"></div>
<div class="t w" style="left:425.60px;top:294.36px;font-size:10.8px;color:#ffffff;font-weight:bold;transform:scaleX(1.0112);">R$ 154,95</div>
<div style="position:absolute;left:546.5px;top:252px;width:509.5px;height:237px;background:#262626;border:1px solid #8c8c8c;border-radius:10px;box-sizing:border-box"></div>
<div class="t w" style="left:758.40px;top:265.86px;font-size:18px;color:#ffffff;font-weight:bold;transform:scaleX(0.8568);">DESPESAS</div>
<div style="position:absolute;left:549px;top:417px;width:506px;height:1px;background:#8c8c8c"></div>
<div style="position:absolute;left:550px;top:417px;width:1px;height:4px;background:#8c8c8c"></div>
<div style="position:absolute;left:613px;top:417px;width:1px;height:4px;background:#8c8c8c"></div>
<div style="position:absolute;left:676px;top:417px;width:1px;height:4px;background:#8c8c8c"></div>
<div style="position:absolute;left:739px;top:417px;width:1px;height:4px;background:#8c8c8c"></div>
<div style="position:absolute;left:802px;top:417px;width:1px;height:4px;background:#8c8c8c"></div>
<div style="position:absolute;left:865px;top:417px;width:1px;height:4px;background:#8c8c8c"></div>
<div style="position:absolute;left:928px;top:417px;width:1px;height:4px;background:#8c8c8c"></div>
<div style="position:absolute;left:991px;top:417px;width:1px;height:4px;background:#8c8c8c"></div>
<div style="position:absolute;left:1054px;top:417px;width:1px;height:4px;background:#8c8c8c"></div>
<div class="t w" style="left:562.23px;top:400.26px;font-size:10.8px;color:#ffffff;font-weight:bold;">R$ 0,00</div>
<div class="t w" style="left:552.35px;top:427.26px;font-size:10.8px;color:#ffffff;font-weight:bold;transform:scaleX(0.8983);">CUSTO POR</div>
<div class="t w" style="left:562.63px;top:441.63px;font-size:10.8px;color:#ffffff;font-weight:bold;transform:scaleX(0.8900);">ATIVO =</div>
<div class="t w" style="left:571.75px;top:456.00px;font-size:10.8px;color:#ffffff;font-weight:bold;transform:scaleX(0.8900);">0,50</div>
<div class="t w" style="left:625.36px;top:400.26px;font-size:10.8px;color:#ffffff;font-weight:bold;">R$ 0,00</div>
<div class="t w" style="left:629.11px;top:427.26px;font-size:10.8px;color:#ffffff;font-weight:bold;transform:scaleX(0.9513);">ÁGUA</div>
<div class="t w" style="left:688.49px;top:400.26px;font-size:10.8px;color:#ffffff;font-weight:bold;">R$ 0,00</div>
<div class="t w" style="left:698.19px;top:427.26px;font-size:10.8px;color:#ffffff;font-weight:bold;transform:scaleX(0.8741);">LUZ</div>
<div class="t w" style="left:751.62px;top:400.26px;font-size:10.8px;color:#ffffff;font-weight:bold;">R$ 0,00</div>
<div class="t w" style="left:746.46px;top:427.26px;font-size:10.8px;color:#ffffff;font-weight:bold;transform:scaleX(0.8900);">INTERNET</div>
<div class="t w" style="left:814.75px;top:400.26px;font-size:10.8px;color:#ffffff;font-weight:bold;">R$ 0,00</div>
<div class="t w" style="left:813.68px;top:427.26px;font-size:10.8px;color:#ffffff;font-weight:bold;transform:scaleX(0.8900);">BOLETO</div>
<div class="t w" style="left:877.88px;top:400.26px;font-size:10.8px;color:#ffffff;font-weight:bold;">R$ 0,00</div>
<div class="t w" style="left:868.18px;top:427.26px;font-size:10.8px;color:#ffffff;font-weight:bold;transform:scaleX(0.8900);">CARTÃO DE</div>
<div class="t w" style="left:875.21px;top:441.63px;font-size:10.8px;color:#ffffff;font-weight:bold;transform:scaleX(0.8900);">CRÉDITO</div>
<div class="t w" style="left:941.01px;top:400.26px;font-size:10.8px;color:#ffffff;font-weight:bold;">R$ 0,00</div>
<div class="t w" style="left:930.69px;top:427.26px;font-size:10.8px;color:#ffffff;font-weight:bold;transform:scaleX(0.8900);">COMPRA DE</div>
<div class="t w" style="left:935.13px;top:441.63px;font-size:10.8px;color:#ffffff;font-weight:bold;transform:scaleX(0.8900);">CRÉDITOS</div>
<div class="t w" style="left:1004.13px;top:400.26px;font-size:10.8px;color:#ffffff;font-weight:bold;">R$ 0,00</div>
<div class="t w" style="left:1002.72px;top:427.26px;font-size:10.8px;color:#ffffff;font-weight:bold;transform:scaleX(0.8900);">OUTRAS</div>
<div class="t w" style="left:996.83px;top:441.63px;font-size:10.8px;color:#ffffff;font-weight:bold;transform:scaleX(0.8900);">DESPESAS</div>
<div style="position:absolute;left:1067px;top:251px;width:267px;height:238px;background:#262626;border:1px solid #8c8c8c;border-radius:10px;box-sizing:border-box"></div>
<div class="t" style="left:1176.60px;top:267.46px;font-size:10.8px;color:#0a0a0a;font-weight:bold;transform:scaleX(1.0233);">INATIVO</div>
<div class="t" style="left:1195.60px;top:281.26px;font-size:10.8px;color:#0a0a0a;font-weight:bold;">0</div>
<div class="t w" style="left:1183.40px;top:289.46px;font-size:10.8px;color:#ffffff;font-weight:bold;transform:scaleX(1.0124);">ATIVO</div>
<div class="t w" style="left:1196.50px;top:304.26px;font-size:10.8px;color:#ffffff;font-weight:bold;">0</div>
<div style="position:absolute;left:35px;top:495px;width:503.5px;height:245.5px;background:#262626;border:1px solid #8c8c8c;border-radius:10px;box-sizing:border-box"></div>
<div class="t w" style="left:160.60px;top:508.76px;font-size:18px;color:#ffffff;font-weight:bold;transform:scaleX(0.9373);">SERVIDORES MAIS VENDIDOS</div>
<div style="position:absolute;left:114px;top:527px;width:1px;height:201px;background:#8c8c8c"></div>
<div style="position:absolute;left:110.5px;top:527px;width:3.5px;height:1px;background:#8c8c8c"></div>
<div style="position:absolute;left:110.5px;top:545px;width:3.5px;height:1px;background:#8c8c8c"></div>
<div style="position:absolute;left:110.5px;top:563px;width:3.5px;height:1px;background:#8c8c8c"></div>
<div style="position:absolute;left:110.5px;top:581px;width:3.5px;height:1px;background:#8c8c8c"></div>
<div style="position:absolute;left:110.5px;top:600px;width:3.5px;height:1px;background:#8c8c8c"></div>
<div style="position:absolute;left:110.5px;top:618px;width:3.5px;height:1px;background:#8c8c8c"></div>
<div style="position:absolute;left:110.5px;top:636px;width:3.5px;height:1px;background:#8c8c8c"></div>
<div style="position:absolute;left:110.5px;top:654px;width:3.5px;height:1px;background:#8c8c8c"></div>
<div style="position:absolute;left:110.5px;top:673px;width:3.5px;height:1px;background:#8c8c8c"></div>
<div style="position:absolute;left:110.5px;top:691px;width:3.5px;height:1px;background:#8c8c8c"></div>
<div style="position:absolute;left:110.5px;top:709px;width:3.5px;height:1px;background:#8c8c8c"></div>
<div style="position:absolute;left:110.5px;top:727px;width:3.5px;height:1px;background:#8c8c8c"></div>
<div class="t w" style="left:97.91px;top:530.72px;font-size:9.7px;color:#ffffff;font-weight:bold;">0</div>
<div class="t w" style="left:121.00px;top:531.22px;font-size:9.7px;color:#ffffff;font-weight:bold;transform:scaleX(1.0214);">R$ 0,00</div>
<div class="t w" style="left:97.91px;top:548.98px;font-size:9.7px;color:#ffffff;font-weight:bold;">0</div>
<div class="t w" style="left:121.00px;top:549.48px;font-size:9.7px;color:#ffffff;font-weight:bold;transform:scaleX(1.0214);">R$ 0,00</div>
<div class="t w" style="left:97.91px;top:567.24px;font-size:9.7px;color:#ffffff;font-weight:bold;">0</div>
<div class="t w" style="left:121.00px;top:567.74px;font-size:9.7px;color:#ffffff;font-weight:bold;transform:scaleX(1.0214);">R$ 0,00</div>
<div class="t w" style="left:97.91px;top:585.50px;font-size:9.7px;color:#ffffff;font-weight:bold;">0</div>
<div class="t w" style="left:121.00px;top:586.00px;font-size:9.7px;color:#ffffff;font-weight:bold;transform:scaleX(1.0214);">R$ 0,00</div>
<div class="t w" style="left:97.91px;top:603.76px;font-size:9.7px;color:#ffffff;font-weight:bold;">0</div>
<div class="t w" style="left:121.00px;top:604.26px;font-size:9.7px;color:#ffffff;font-weight:bold;transform:scaleX(1.0214);">R$ 0,00</div>
<div class="t w" style="left:97.91px;top:622.02px;font-size:9.7px;color:#ffffff;font-weight:bold;">0</div>
<div class="t w" style="left:121.00px;top:622.52px;font-size:9.7px;color:#ffffff;font-weight:bold;transform:scaleX(1.0214);">R$ 0,00</div>
<div class="t w" style="left:97.91px;top:640.28px;font-size:9.7px;color:#ffffff;font-weight:bold;">0</div>
<div class="t w" style="left:121.00px;top:640.78px;font-size:9.7px;color:#ffffff;font-weight:bold;transform:scaleX(1.0214);">R$ 0,00</div>
<div class="t w" style="left:97.91px;top:658.54px;font-size:9.7px;color:#ffffff;font-weight:bold;">0</div>
<div class="t w" style="left:121.00px;top:659.04px;font-size:9.7px;color:#ffffff;font-weight:bold;transform:scaleX(1.0214);">R$ 0,00</div>
<div class="t w" style="left:49.90px;top:676.80px;font-size:9.7px;color:#ffffff;font-weight:bold;transform:scaleX(0.9810);">Crunchyroll</div>
<div class="t w" style="left:123.80px;top:677.30px;font-size:9.7px;color:#ffffff;font-weight:bold;transform:scaleX(1.0125);">R$ 9,00</div>
<div style="position:absolute;left:114.5px;top:677.9100000000001px;width:2.5px;height:7.3px;background:#f2f2f2"></div>
<div class="t w" style="left:42.00px;top:695.06px;font-size:9.7px;color:#ffffff;font-weight:bold;transform:scaleX(0.9721);">EPPI CINEMA</div>
<div class="t w" style="left:130.70px;top:695.56px;font-size:9.7px;color:#ffffff;font-weight:bold;transform:scaleX(1.0160);">R$ 30,00</div>
<div style="position:absolute;left:114.5px;top:696.1700000000001px;width:9.5px;height:7.3px;background:#f2f2f2"></div>
<div class="t w" style="left:54.10px;top:713.32px;font-size:9.7px;color:#ffffff;font-weight:bold;transform:scaleX(0.9036);">TV XPRESS</div>
<div class="t w" style="left:433.00px;top:713.82px;font-size:9.7px;color:#ffffff;font-weight:bold;transform:scaleX(1.0276);">R$ 965,37</div>
<div style="position:absolute;left:114.5px;top:714.4300000000001px;width:311.5px;height:7.3px;background:#f2f2f2"></div>
<div class="t" style="left:569.30px;top:522.62px;font-size:11.2px;color:#f2f2f2;transform:scaleX(0.8351);">TV XPRESS</div>
<div class="t" style="left:742.30px;top:518.12px;font-size:11.2px;color:#f2f2f2;transform:scaleX(0.9364);">R$ 965,37</div>
<div style="position:absolute;left:551px;top:537.5px;width:266.5px;height:246.5px;background:#262626;border:1px solid #8c8c8c;border-radius:10px;box-sizing:border-box"></div>
<div class="t w" style="left:603.30px;top:549.47px;font-size:14.8px;color:#ffffff;font-weight:bold;transform:scaleX(1.0326);">EM DIA E EM ATRASO</div>
<div class="t w" style="left:615.00px;top:575.55px;font-size:14px;color:#ffffff;font-weight:bold;transform:scaleX(1.0135);">11</div>
<div style="position:absolute;left:598px;top:597px;width:49px;height:156.5px;background:#f2f2f2"></div>
<div style="position:absolute;left:721px;top:739px;width:49px;height:14.5px;background:#f2f2f2"></div>
<div class="t w" style="left:741.61px;top:717.55px;font-size:14px;color:#ffffff;font-weight:bold;">1</div>
<div style="position:absolute;left:560px;top:753px;width:248px;height:1px;background:#8c8c8c"></div>
<div style="position:absolute;left:560px;top:753px;width:1px;height:4px;background:#8c8c8c"></div>
<div style="position:absolute;left:683px;top:753px;width:1px;height:4px;background:#8c8c8c"></div>
<div style="position:absolute;left:807px;top:753px;width:1px;height:4px;background:#8c8c8c"></div>
<div class="t w" style="left:601.85px;top:763.82px;font-size:11.2px;color:#ffffff;font-weight:bold;transform:scaleX(0.9668);">EM DIA</div>
<div class="t w" style="left:721.95px;top:763.82px;font-size:11.2px;color:#ffffff;font-weight:bold;transform:scaleX(0.9112);">VENCIDO</div>
<div style="position:absolute;left:827px;top:500px;width:503px;height:249px;background:#262626;border:1px solid #8c8c8c;border-radius:10px;box-sizing:border-box"></div>
<div class="t w" style="left:941.60px;top:514.16px;font-size:18px;color:#ffffff;font-weight:bold;transform:scaleX(0.9311);">COMPRA E VENDA DE CRÉDITOS</div>
<div class="t w" style="left:940.30px;top:701.96px;font-size:10.8px;color:#ffffff;font-weight:bold;transform:scaleX(1.0046);">R$ 0,00</div>
<div class="t w" style="left:1176.25px;top:701.96px;font-size:10.8px;color:#ffffff;font-weight:bold;transform:scaleX(1.0125);">R$ 0,00</div>
<div style="position:absolute;left:841px;top:719px;width:473px;height:1px;background:#8c8c8c"></div>
<div style="position:absolute;left:841px;top:719px;width:1px;height:4px;background:#8c8c8c"></div>
<div style="position:absolute;left:1077px;top:719px;width:1px;height:4px;background:#8c8c8c"></div>
<div style="position:absolute;left:1313px;top:719px;width:1px;height:4px;background:#8c8c8c"></div>
<div class="t w" style="left:935.80px;top:730.46px;font-size:10.8px;color:#ffffff;font-weight:bold;transform:scaleX(0.9792);">COMPRA</div>
<div class="t w" style="left:1176.80px;top:730.46px;font-size:10.8px;color:#ffffff;font-weight:bold;transform:scaleX(0.9840);">VENDA</div>
<div style="position:absolute;left:1308px;top:604px;width:106.5px;height:20px;background:#f9f9f9;border:1px solid #cfcfcf;border-radius:3px;box-sizing:border-box;box-shadow:2px 2px 2px rgba(0,0,0,0.28)"></div>
<div class="t" style="left:1314.00px;top:607.67px;font-size:12.2px;color:#4d4d55;transform:scaleX(0.9574);">Área de Plotagem</div>
<div style="position:absolute;left:21.8px;top:225.8px;width:6px;height:18.8px;border:2px solid #107c41;box-sizing:border-box"></div>
<div style="position:absolute;left:24.2px;top:241px;width:4.6px;height:4.8px;background:#107c41;box-shadow:0 0 0 1px #fff"></div>
<div style="position:absolute;left:0px;top:977px;width:1919px;height:32px;background:#e6e9ea"></div>
<div style="position:absolute;left:0px;top:1008.8px;width:1919px;height:1px;background:#c6c6c6"></div>
<div style="position:absolute;left:0px;top:1009.5px;width:1919px;height:21.5px;background:#f4f4f4"></div>
<div style="position:absolute;left:1898.2px;top:970px;width:21px;height:7px;background:#e6e9ea"></div>
<div style="position:absolute;left:1900.7px;top:940px;width:17px;height:40px;background:#f4f4f4;border-radius:0 0 8px 8px"></div>
<div style="position:absolute;left:1905px;top:900px;width:9px;height:60.5px;background:#707070;border-radius:0 0 4.5px 4.5px"></div>
<div class="t" style="left:126.30px;top:986.85px;font-size:13.4px;color:#333;transform:scaleX(1.0196);">Instrucao</div>
<div class="t" style="left:214.00px;top:986.85px;font-size:13.4px;color:#333;transform:scaleX(1.0065);">Cadastro Clientes</div>
<div class="t" style="left:351.70px;top:986.85px;font-size:13.4px;color:#333;">Cadastro Planos</div>
<div class="t" style="left:482.70px;top:986.85px;font-size:13.4px;color:#333;transform:scaleX(1.0178);">Cadastro Mensagem</div>
<div class="t" style="left:640.70px;top:986.85px;font-size:13.4px;color:#333;transform:scaleX(0.9908);">Cadastro Despesas</div>
<div class="t" style="left:786.70px;top:986.85px;font-size:13.4px;color:#333;transform:scaleX(0.9938);">Entradas</div>
<div class="t" style="left:868.30px;top:986.85px;font-size:13.4px;color:#333;transform:scaleX(0.9515);">Despesas</div>
<div class="t" style="left:1035.00px;top:986.85px;font-size:13.4px;color:#333;transform:scaleX(1.0242);">Inativos</div>
<div style="position:absolute;left:197.4px;top:984.6px;width:1px;height:17.2px;background:#c9c9c9"></div>
<div style="position:absolute;left:336px;top:984.6px;width:1px;height:17.2px;background:#c9c9c9"></div>
<div style="position:absolute;left:466px;top:984.6px;width:1px;height:17.2px;background:#c9c9c9"></div>
<div style="position:absolute;left:625px;top:984.6px;width:1px;height:17.2px;background:#c9c9c9"></div>
<div style="position:absolute;left:772.3px;top:984.6px;width:1px;height:17.2px;background:#c9c9c9"></div>
<div style="position:absolute;left:854.3px;top:984.6px;width:1px;height:17.2px;background:#c9c9c9"></div>
<div style="position:absolute;left:1020px;top:984.6px;width:1px;height:17.2px;background:#c9c9c9"></div>
<div style="position:absolute;left:1097.3px;top:984.6px;width:1px;height:17.2px;background:#c9c9c9"></div>
<svg style="position:absolute;left:0;top:0" width="1919" height="1031"><path d="M937.5 976.5A6.5 6.5 0 0 1 944 983V999.5A5.5 5.5 0 0 0 949.5 1005H1010.5A5.5 5.5 0 0 0 1016 999.5V983A6.5 6.5 0 0 1 1022.5 976.5Z" fill="#fff"/></svg>
<div style="position:absolute;left:939px;top:984.6px;width:1px;height:17.2px;background:#c9c9c9"></div>
<div class="t" style="left:951.70px;top:984.35px;font-size:13.4px;color:#242424;font-weight:bold;transform:scaleX(1.0117);">Grafico1</div>
<div style="position:absolute;left:951.7px;top:999.8px;width:56px;height:2.2px;background:#107c41"></div>
<div style="position:absolute;left:1659px;top:984px;width:241.7px;height:17px;background:#f5f5f5;border-radius:8.5px"></div>
<div style="position:absolute;left:1675.8px;top:988px;width:17.4px;height:9.1px;background:#707070;border-radius:4.5px"></div>
<div class="t" style="left:11.70px;top:1015.19px;font-size:11.7px;color:#333;transform:scaleX(0.9660);">Pronto</div>
<div class="t" style="left:84.60px;top:1014.19px;font-size:11.7px;color:#222;font-weight:bold;transform:scaleX(0.9006);">Acessibilidade: investigar</div>
<div style="position:absolute;left:1620px;top:1009.5px;width:39.8px;height:21.5px;background:#dcdcdc"></div>
<div style="position:absolute;left:1799.1px;top:1015px;width:4.8px;height:10.5px;background:#707070;border-radius:1px"></div>
<div class="t" style="left:1885.40px;top:1014.29px;font-size:11.7px;color:#333;transform:scaleX(0.8669);">85%</div>
<svg style="position:absolute;left:0;top:0" width="1919" height="1031"><path d="M1658 9.5H1668.5V17H1663L1660.5 19.5V17H1658Z" fill="none" stroke="#333" stroke-width="1.1"/><path d="M1768 12.5V21.5H1777.5V18M1771 18.5Q1771 12 1777 12.5V10L1780.5 13.8L1777 17.5V15Q1773.5 14.8 1771 18.5Z" fill="none" stroke="#fff" stroke-width="1.1"/><path d="M1897.2 13.8L1900.5 17L1903.8 13.8" fill="none" stroke="#fff" stroke-width="1.3"/><path d="M93.8 150.3L98.4 154.9L103 150.3" fill="none" stroke="#333" stroke-width="1.2"/><rect x="119.2" y="146.1" width="2" height="2" fill="#222"/><rect x="119.2" y="150.0" width="2" height="2" fill="#222"/><rect x="119.2" y="153.9" width="2" height="2" fill="#222"/><path d="M137.2 145.3L148.5 156.7M148.5 145.3L137.2 156.7" stroke="#aaa" stroke-width="1.1"/><path d="M159 150.5L164 155.5L174.5 145.3" fill="none" stroke="#b5b5b5" stroke-width="1.1"/><text x="183.8" y="154.7" font-size="17" font-style="italic" fill="#222" font-family="Liberation Serif" textLength="14.3" lengthAdjust="spacingAndGlyphs">fx</text><path d="M204 150.5L208.5 155L213 150.5" fill="none" stroke="#888" stroke-width="1"/><path d="M1897.5 151.5L1902.3 146.8L1907 151.5" fill="none" stroke="#444" stroke-width="1.1"/><path d="M11.5 223L19.2 223L19.2 215.3Z" fill="#b9b9b9"/><path d="M1904.8 222.4L1909.5 215.4L1914.2 222.4Z" fill="#6e6e6e"/><path d="M1905 967.8L1909.5 974.9L1914 967.8Z" fill="#6e6e6e"/><path d="M1905 967.8L1909.5 974.9L1914 967.8Z" fill="#6e6e6e"/><path d="M35 988.3L29 992.5L35 996.7M61.5 988.3L67.5 992.5L61.5 996.7" fill="none" stroke="#9a9a9a" stroke-width="1.1"/><path d="M1139 992.5H1151M1145 986.5V998.5" stroke="#333" stroke-width="1.1"/><rect x="1642.2" y="988.4" width="2" height="2" fill="#222"/><rect x="1642.2" y="992.7" width="2" height="2" fill="#222"/><rect x="1642.2" y="997" width="2" height="2" fill="#222"/><path d="M1671.4 988.3L1664.2 992.6L1671.4 997Z" fill="#6e6e6e"/><path d="M1888.8 988.3L1896.2 992.6L1888.8 997Z" fill="#6e6e6e"/><circle cx="72.5" cy="1015.3" r="1.8" fill="none" stroke="#333" stroke-width="1"/><path d="M66.5 1018.3L72.5 1017.8L78.5 1018.3M72.5 1017.8V1021.5L69 1026.3M73 1022L75 1023.5M74.5 1021.5L79.8 1026.5M79.8 1021.5L74.5 1026.5" fill="none" stroke="#333" stroke-width="1"/><rect x="1633.8" y="1013.8" width="11.4" height="11.4" fill="none" stroke="#222" stroke-width="1.5"/><path d="M1637.6 1013.8V1025.2M1641.5 1013.8V1025.2M1633.8 1017.6H1645.2M1633.8 1021.4H1645.2" stroke="#222" stroke-width="1.3"/><rect x="1673.8" y="1013.8" width="12.3" height="11.4" fill="none" stroke="#222" stroke-width="1.5"/><rect x="1676.6" y="1015.8" width="6.8" height="7.2" fill="none" stroke="#222" stroke-width="1.1"/><path d="M1678.2 1017.7H1681.8M1678.2 1019.5H1681.8M1678.2 1021.3H1681.8" stroke="#222" stroke-width="0.9"/><rect x="1713.8" y="1013.8" width="12.3" height="11.4" fill="none" stroke="#222" stroke-width="1.5"/><path d="M1717.4 1013.8V1020.5H1721.3V1013.8M1713.8 1020.5H1717.4" fill="none" stroke="#222" stroke-width="1.2"/><path d="M1746 1019.5H1753.7M1863.5 1019.5H1871.6M1867.55 1015.5V1023.5" stroke="#444" stroke-width="1.1"/><path d="M1759.4 1019.8H1858.5" stroke="#888" stroke-width="1"/><path d="M1809.6 1016.5V1023" stroke="#666" stroke-width="1"/></svg>
</body></html>
